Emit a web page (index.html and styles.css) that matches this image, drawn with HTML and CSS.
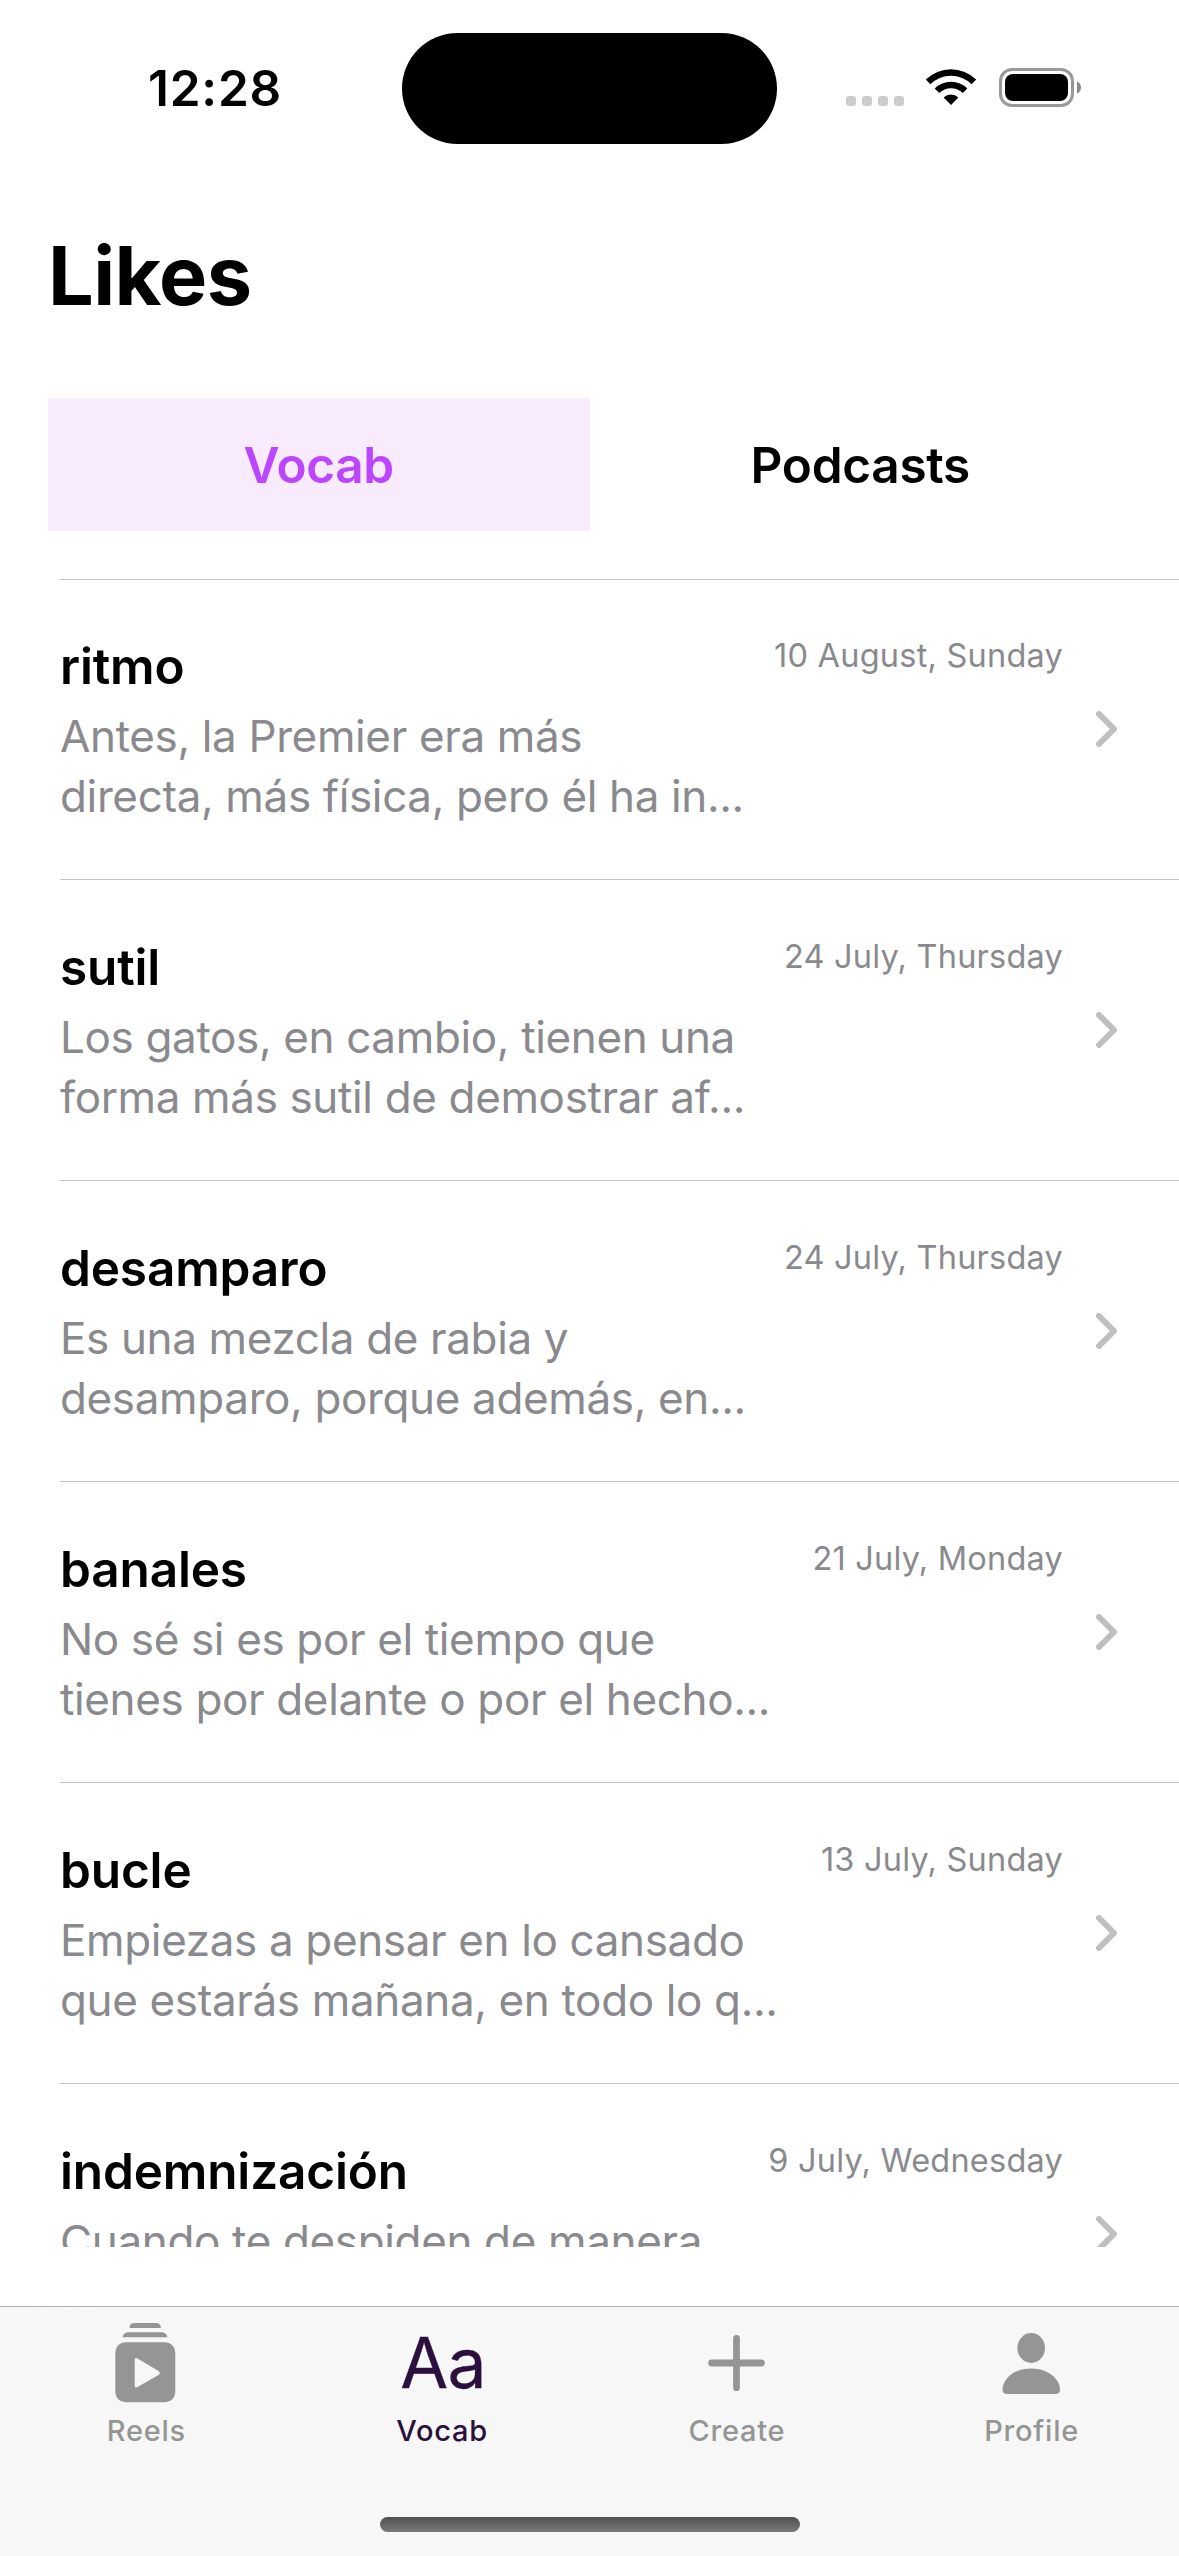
FILE: index.html
```html
<!DOCTYPE html>
<html lang="en">
<head>
<meta charset="utf-8">
<title>Likes</title>
<link rel="stylesheet" href="styles.css">
</head>
<body>
<div class="screen">
  <header class="status">
    <div class="time">12:28</div>
    <div class="island"></div>
    <div class="indicators">
      <svg class="dots" width="58" height="10" viewBox="0 0 58 10"><rect width="10" height="10" rx="3.2"/><rect x="16" width="10" height="10" rx="3.2"/><rect x="32" width="10" height="10" rx="3.2"/><rect x="48" width="10" height="10" rx="3.2"/></svg>
      <svg class="wifi" width="52" height="38" viewBox="0 0 52 38">
        <path d="M.8 11.6A36 36 0 0 1 51.2 11.6L46.6 16.2A29.5 29.5 0 0 0 5.4 16.2Z"/>
        <path d="M9.7 20.4A23.5 23.5 0 0 1 42.3 20.4L37.8 25A17 17 0 0 0 14.2 25Z"/>
        <path d="M18.6 29.4A11 11 0 0 1 33.4 29.4L26 37Z"/>
      </svg>
      <svg class="battery" width="83" height="39" viewBox="0 0 83 39">
        <rect x="1.5" y="1.5" width="72" height="36" rx="11.5" fill="none" stroke="#999" stroke-width="3"/>
        <rect x="6" y="6" width="63" height="27" rx="8"/>
        <path d="M78 13.5c2.600.8 4 3.200 4 6s-1.400 5.200-4 6z" fill="#8a8a8a"/>
      </svg>
    </div>
  </header>

  <h1 class="title">Likes</h1>

  <nav class="segments">
    <div class="segment selected">Vocab</div>
    <div class="segment">Podcasts</div>
  </nav>

  <main class="list">
    <article class="row">
      <div class="text"><h2>ritmo</h2><p>Antes, la Premier era más<br>directa, más física, pero él ha in...</p></div>
      <time>10 August, Sunday</time>
      <svg class="chevron" width="22" height="36" viewBox="0 0 22 36"><path d="M3 3 18 18 3 33"/></svg>
    </article>
    <article class="row">
      <div class="text"><h2>sutil</h2><p>Los gatos, en cambio, tienen una<br>forma más sutil de demostrar af...</p></div>
      <time>24 July, Thursday</time>
      <svg class="chevron" width="22" height="36" viewBox="0 0 22 36"><path d="M3 3 18 18 3 33"/></svg>
    </article>
    <article class="row">
      <div class="text"><h2>desamparo</h2><p>Es una mezcla de rabia y<br>desamparo, porque además, en...</p></div>
      <time>24 July, Thursday</time>
      <svg class="chevron" width="22" height="36" viewBox="0 0 22 36"><path d="M3 3 18 18 3 33"/></svg>
    </article>
    <article class="row">
      <div class="text"><h2>banales</h2><p>No sé si es por el tiempo que<br>tienes por delante o por el hecho...</p></div>
      <time>21 July, Monday</time>
      <svg class="chevron" width="22" height="36" viewBox="0 0 22 36"><path d="M3 3 18 18 3 33"/></svg>
    </article>
    <article class="row">
      <div class="text"><h2>bucle</h2><p>Empiezas a pensar en lo cansado<br>que estarás mañana, en todo lo q...</p></div>
      <time>13 July, Sunday</time>
      <svg class="chevron" width="22" height="36" viewBox="0 0 22 36"><path d="M3 3 18 18 3 33"/></svg>
    </article>
    <article class="row">
      <div class="text"><h2>indemnización</h2><p>Cuando te despiden de manera</p></div>
      <time>9 July, Wednesday</time>
      <svg class="chevron" width="22" height="36" viewBox="0 0 22 36"><path d="M3 3 18 18 3 33"/></svg>
    </article>
  </main>

  <footer class="tabbar">
    <div class="tabs">
      <div class="tab">
        <svg class="icon" width="100" height="106" viewBox="0 0 100 106">
          <path d="M32.500 21C32.500 17.500 34 16 37 16H59C62 16 63.800 17.500 63.800 21Z"/>
          <path d="M25.500 30.200C26.300 27 28.200 25.300 31.500 25.300H64.500C67.800 25.300 69.700 27 70.500 30.200Z"/>
          <path fill-rule="evenodd" d="M28.300 35.300H68.300A10 10 0 0 1 78.300 45.300V85.300A10 10 0 0 1 68.300 95.300H28.300A10 10 0 0 1 18.300 85.300V45.300A10 10 0 0 1 28.300 35.300ZM37.700 53V78.500Q37.700 81.500 40.500 80L61.500 68Q64 66 61.500 64L40.500 51.500Q37.700 50 37.700 53Z"/>
        </svg>
        <span>Reels</span>
      </div>
      <div class="tab active">
        <div class="icon letters">Aa</div>
        <span>Vocab</span>
      </div>
      <div class="tab">
        <svg class="icon" width="100" height="106" viewBox="0 0 100 106"><path class="stroke" d="M49.500 31.300V80.700M24.600 56H74.400"/></svg>
        <span>Create</span>
      </div>
      <div class="tab">
        <svg class="icon" width="100" height="106" viewBox="0 0 100 106">
          <ellipse cx="49.200" cy="41" rx="13.800" ry="15"/>
          <path d="M25 87Q20.500 87 20.500 82.500C20.500 73 31 61.500 49.200 61.500S78 73 78 82.500Q78 87 73.500 87Z"/>
        </svg>
        <span>Profile</span>
      </div>
    </div>
    <div class="home"></div>
  </footer>
</div>
</body>
</html>
```
FILE: styles.css
```css
* { box-sizing: border-box; }
body { margin: 0; background: #fff; color: #000; font-family: Inter, "Liberation Sans", sans-serif; }
h1, h2, p { margin: 0; }
svg { display: block; flex: none; }

.screen { width: 1179px; height: 2556px; display: flex; flex-direction: column; overflow: hidden; }

.status { display: grid; grid-template-columns: 402px 375px 402px; height: 226px; padding-top: 33px; align-items: start; }
.time { padding: 25px 0 0 148px; font-size: 49.5px; line-height: 60px; font-weight: 600; letter-spacing: .8px; }
.island { height: 111px; border-radius: 56px; background: #000; }
.indicators { display: flex; align-items: flex-start; padding: 35px 0 0 69px; }
.dots { margin-top: 28px; fill: #ccc; }
.wifi { margin: 0 22px 0 21px; }

.title { height: 172px; padding-left: 48px; font-size: 81px; line-height: 100px; font-weight: 700; letter-spacing: -.6px; }

.segments { display: grid; grid-template-columns: 1fr 1fr; height: 133px; margin: 0 48px 47px; flex: none; }
.segment { display: flex; align-items: center; justify-content: center; font-size: 49.5px; font-weight: 600; letter-spacing: -.3px; }
.segment.selected { background: #f8ebfe; color: #bc45ff; }

.list { height: 1669px; padding-top: 1px; flex: none; overflow: hidden; }
.row { display: grid; grid-template-columns: 1fr auto 22px; height: 301px; margin-left: 60px; padding: 57px 61px 0 0; border-top: 1px solid #c4c4c6; }
.row:first-child { height: 300px; padding-top: 56px; }
.text h2 { font-size: 49.5px; line-height: 60px; font-weight: 600; letter-spacing: -.15px; white-space: nowrap; }
.text p { margin-top: 10px; font-size: 44px; line-height: 60px; letter-spacing: -.36px; color: #8a8a8e; white-space: nowrap; }
.row time { margin-right: 33px; font-size: 32.5px; line-height: 40px; letter-spacing: .22px; color: #8a8a8e; }
.chevron { margin-top: 75px; fill: none; stroke: #bfbfbf; stroke-width: 6; stroke-linecap: round; stroke-linejoin: round; }

.tabbar { height: 250px; margin-top: 59px; border-top: 1px solid #b1b1b1; background: linear-gradient(90deg, #f5f8f5, #f7f7f7 110px); color: #949693; }
.tabs { display: grid; grid-template-columns: repeat(4, 1fr); height: 210px; }
.tab { display: flex; flex-direction: column; align-items: center; font-size: 29px; line-height: 36px; font-weight: 500; letter-spacing: .75px; }
.tab:first-child span { margin-right: 2px; }
.tab.active { color: #2b103e; }
.icon { height: 106px; fill: currentColor; }
.icon .stroke { fill: none; stroke: currentColor; stroke-width: 6.8; stroke-linecap: round; }
.letters { padding: 6px 0 0 2px; font-size: 69.5px; line-height: 100px; font-weight: 400; letter-spacing: -.5px; -webkit-text-stroke: .3px currentColor; }
.home { width: 420px; height: 15px; margin: 0 auto; border-radius: 8px; background: linear-gradient(#505050, #7a7a7a); }
```
